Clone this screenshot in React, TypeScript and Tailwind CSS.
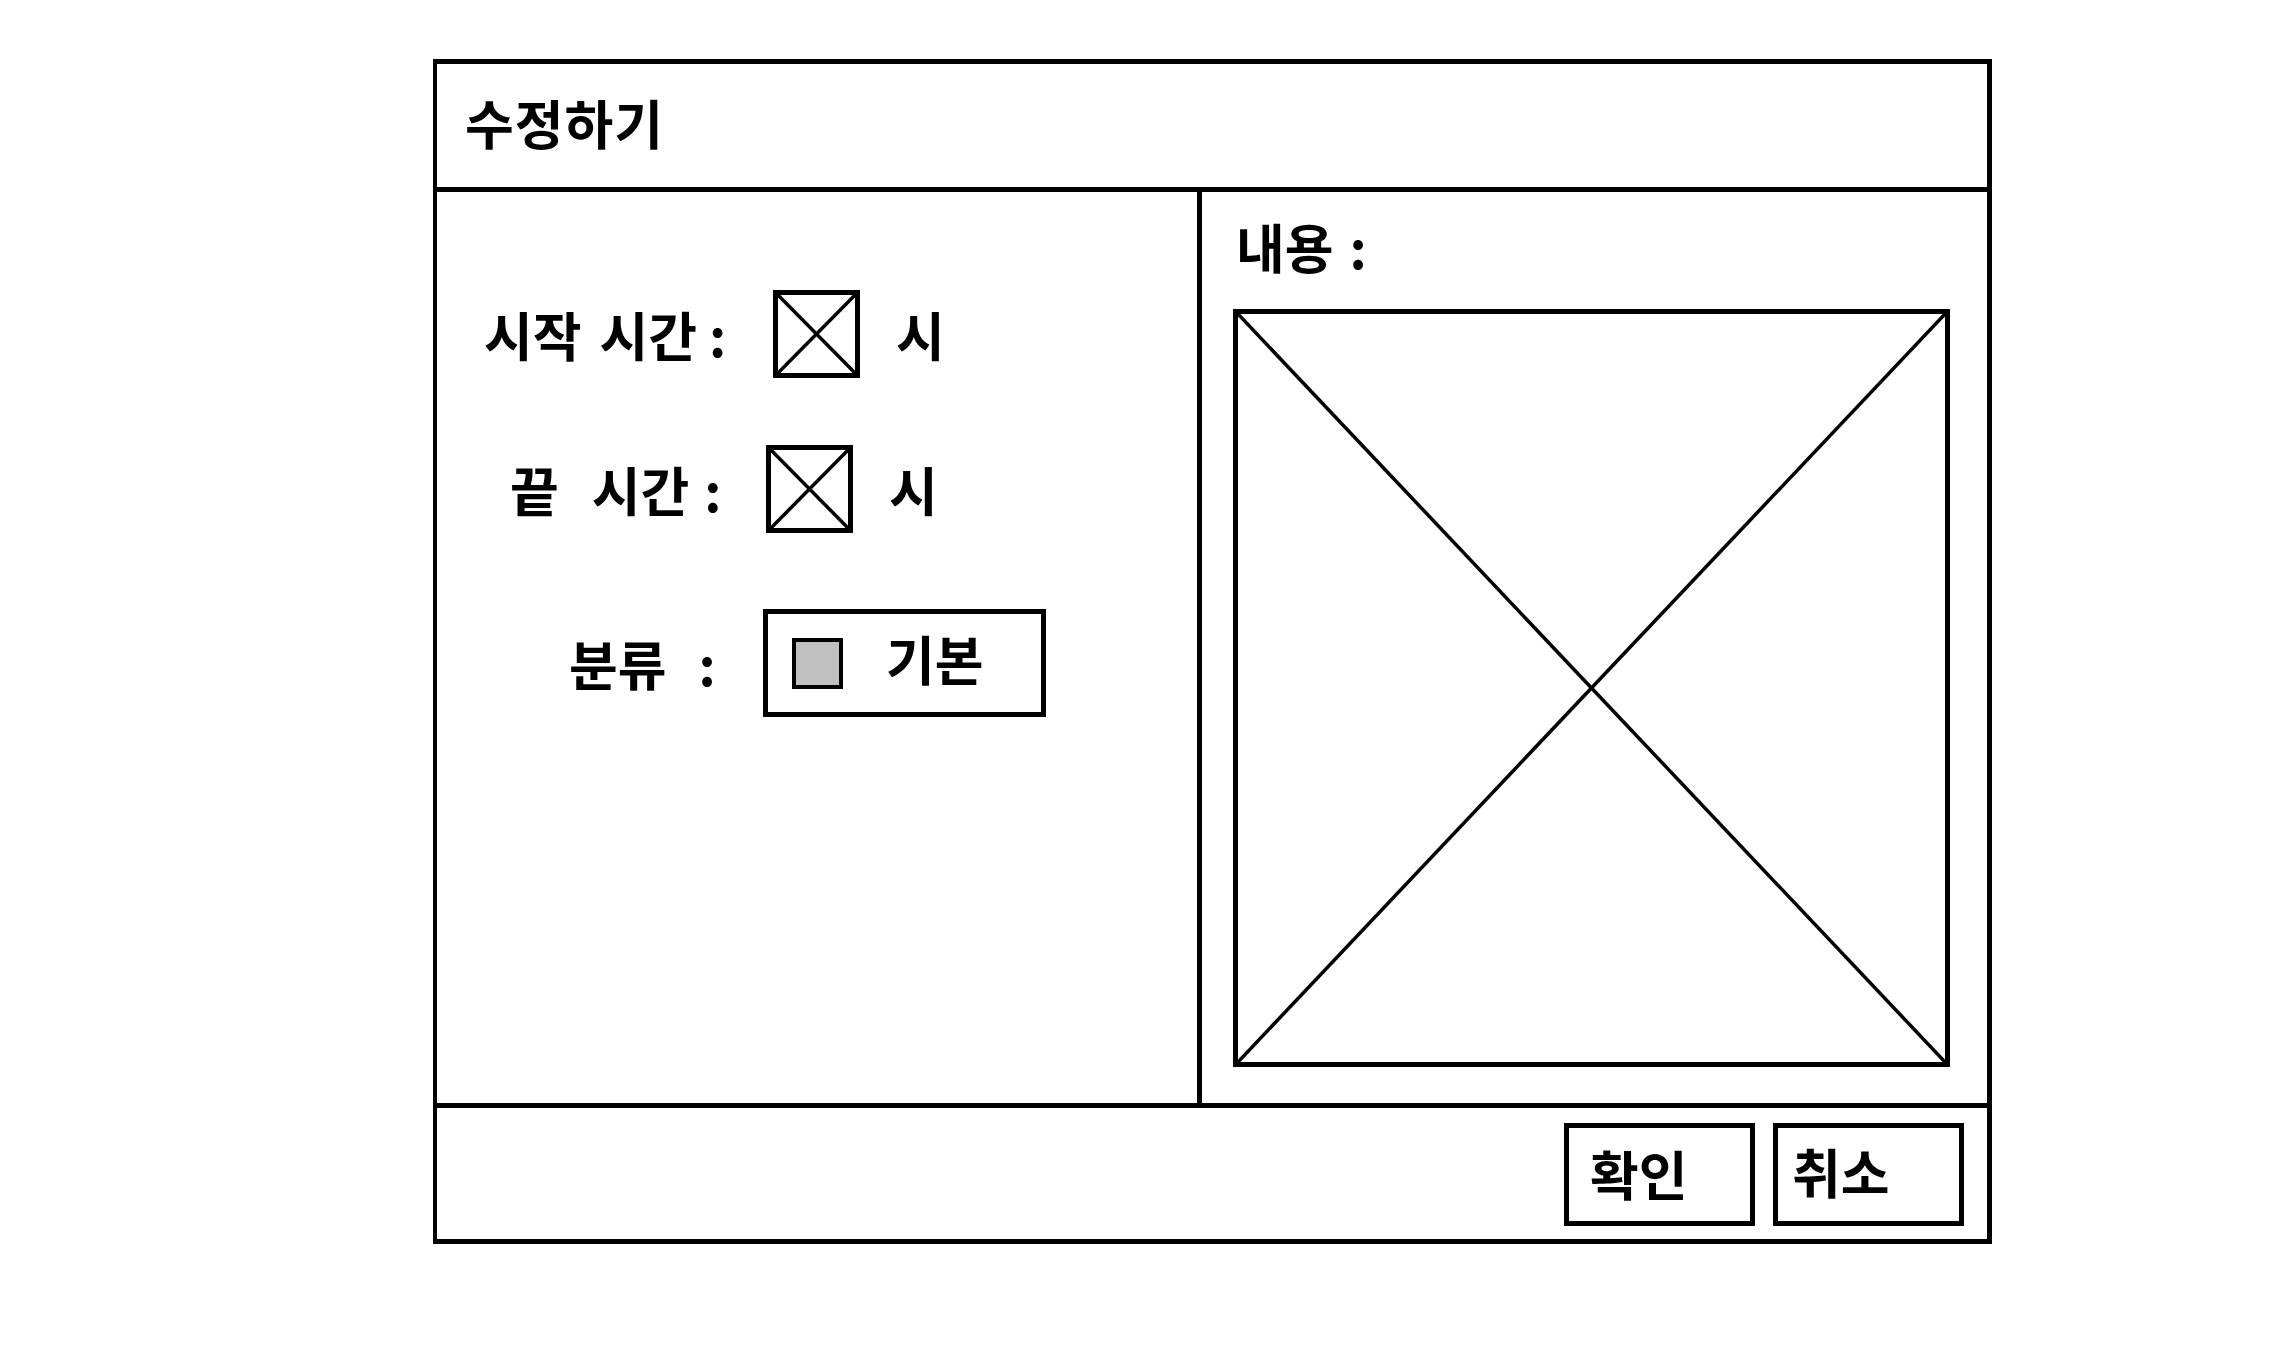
import React from "react";

const font = { fontFamily: '"Noto Sans CJK KR", "Noto Sans", sans-serif' };

function XBox({ className }: { className: string }) {
  return (
    <div className={`border-[5px] border-black bg-white ${className}`}>
      <svg className="block h-full w-full" viewBox="0 0 100 100" preserveAspectRatio="none">
        <line x1="0" y1="0" x2="100" y2="100" stroke="black" strokeWidth="3.5" vectorEffect="non-scaling-stroke" />
        <line x1="100" y1="0" x2="0" y2="100" stroke="black" strokeWidth="3.5" vectorEffect="non-scaling-stroke" />
      </svg>
    </div>
  );
}

const T = "text-[53px] font-bold leading-none";

export default function App() {
  return (
    <div className="h-[1366px] w-[2278px] bg-white text-black" style={font}>
      <div className="ml-[433px] pt-[59px]">
        <div className="flex h-[1185px] w-[1559px] flex-col border-[5px] border-l-4 border-black">
          {/* Header */}
          <div className="flex h-[128px] shrink-0 items-center border-b-[5px] border-black pl-[28px]">
            <span className={`${T} mb-[6px] tracking-[1px]`}>수정하기</span>
          </div>

          {/* Body */}
          <div className="flex h-[911px] shrink-0">
            {/* Left panel */}
            <div className="flex w-[765px] shrink-0 flex-col border-r-[5px] border-black pt-[98px]">
              <div className="flex items-center pl-[47px]">
                <div className="flex w-[289px] shrink-0 items-center">
                  <span className={T}>시작</span>
                  <span className={`${T} ml-[18px]`}>시간</span>
                  <span className={`${T} ml-[12px]`}>:</span>
                </div>
                <XBox className="h-[88px] w-[87px] shrink-0" />
                <span className={`${T} ml-[36px]`}>시</span>
              </div>
              <div className="mt-[67px] flex items-center pl-[73px]">
                <div className="flex w-[256px] shrink-0 items-center">
                  <span className={T}>끝</span>
                  <span className={`${T} ml-[33px]`}>시간</span>
                  <span className={`${T} ml-[15px]`}>:</span>
                </div>
                <XBox className="h-[88px] w-[87px] shrink-0" />
                <span className={`${T} ml-[36px]`}>시</span>
              </div>
              <div className="mt-[76px] flex items-center pl-[132px]">
                <div className="flex w-[194px] shrink-0 items-center">
                  <span className={T}>분류</span>
                  <span className={`${T} ml-[32px]`}>:</span>
                </div>
                <div className="flex h-[108px] w-[283px] shrink-0 items-center border-[5px] border-black pl-[24px]">
                  <div className="h-[51px] w-[51px] shrink-0 border-4 border-black bg-[#c0c0c0]" />
                  <span className={`${T} mb-[10px] ml-[43px]`}>기본</span>
                </div>
              </div>
            </div>

            {/* Right panel */}
            <div className="flex flex-1 flex-col pl-[31px] pt-[28px]">
              <div className="flex items-center pl-[3px]">
                <span className={T}>내용</span>
                <span className={`${T} ml-[16px]`}>:</span>
              </div>
              <XBox className="mt-[36px] h-[758px] w-[717px] shrink-0" />
            </div>
          </div>

          {/* Footer */}
          <div className="flex flex-1 items-start justify-end gap-[18px] border-t-[5px] border-black pr-[23px] pt-[15px]">
            <div className="flex h-[103px] w-[191px] items-center border-[5px] border-black pl-[21px]">
              <span className={`${T} mb-[2px]`}>확인</span>
            </div>
            <div className="flex h-[103px] w-[191px] items-center border-[5px] border-black pl-[14px]">
              <span className={`${T} mb-[6px]`}>취소</span>
            </div>
          </div>
        </div>
      </div>
    </div>
  );
}
